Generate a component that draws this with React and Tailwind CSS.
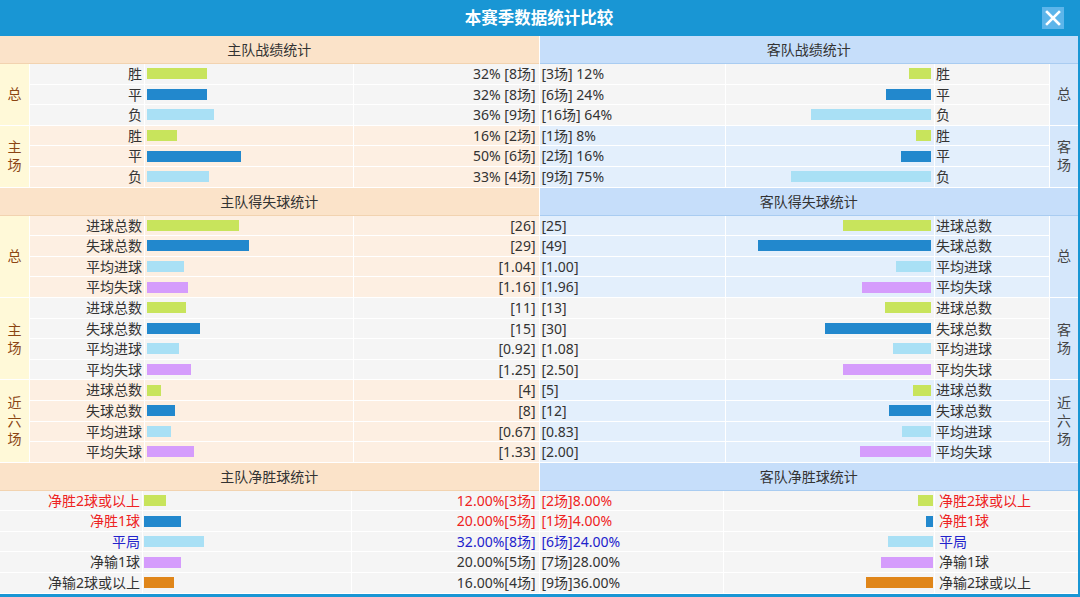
import React from "react"

const BAR = {
  green: "bg-[#c8e45c]",
  blue: "bg-[#2288cd]",
  sky: "bg-[#a9e0f5]",
  purple: "bg-[#d59cfc]",
  orange: "bg-[#e0861a]",
}

const ROW_BG = {
  gray: "bg-[#f5f5f5]",
  peach: "bg-[#fdefe2]",
  blue: "bg-[#e3effc]",
}

const TEXT = {
  dark: "text-[#333333]",
  red: "text-[#ee2222]",
  navy: "text-[#2222cc]",
}

// width helpers, taken from the bar lengths in the original
const pct = (v) => v * 1.87
const goals = (v) => v * 3.53
const avg = (v) => v * 35.3

const homeRecord = [
  {
    label: "总",
    bg: "gray",
    rows: [
      { name: "胜", bar: "green", w: pct(32), value: "32% [8场]" },
      { name: "平", bar: "blue", w: pct(32), value: "32% [8场]" },
      { name: "负", bar: "sky", w: pct(36), value: "36% [9场]" },
    ],
  },
  {
    label: "主场",
    bg: "peach",
    rows: [
      { name: "胜", bar: "green", w: pct(16), value: "16% [2场]" },
      { name: "平", bar: "blue", w: pct(50), value: "50% [6场]" },
      { name: "负", bar: "sky", w: pct(33), value: "33% [4场]" },
    ],
  },
]

const awayRecord = [
  {
    label: "总",
    bg: "gray",
    rows: [
      { name: "胜", bar: "green", w: pct(12), value: "[3场] 12%" },
      { name: "平", bar: "blue", w: pct(24), value: "[6场] 24%" },
      { name: "负", bar: "sky", w: pct(64), value: "[16场] 64%" },
    ],
  },
  {
    label: "客场",
    bg: "blue",
    rows: [
      { name: "胜", bar: "green", w: pct(8), value: "[1场] 8%" },
      { name: "平", bar: "blue", w: pct(16), value: "[2场] 16%" },
      { name: "负", bar: "sky", w: pct(75), value: "[9场] 75%" },
    ],
  },
]

const goalRows = (g, c, ag, ac) => [
  { name: "进球总数", bar: "green", w: goals(g), value: `[${g}]` },
  { name: "失球总数", bar: "blue", w: goals(c), value: `[${c}]` },
  { name: "平均进球", bar: "sky", w: avg(Number(ag)), value: `[${ag}]` },
  { name: "平均失球", bar: "purple", w: avg(Number(ac)), value: `[${ac}]` },
]

const homeGoals = [
  { label: "总", bg: "peach", rows: goalRows(26, 29, "1.04", "1.16") },
  { label: "主场", bg: "gray", rows: goalRows(11, 15, "0.92", "1.25") },
  { label: "近六场", bg: "peach", rows: goalRows(4, 8, "0.67", "1.33") },
]

const awayGoals = [
  { label: "总", bg: "blue", rows: goalRows(25, 49, "1.00", "1.96") },
  { label: "客场", bg: "gray", rows: goalRows(13, 30, "1.08", "2.50") },
  { label: "近六场", bg: "blue", rows: goalRows(5, 12, "0.83", "2.00") },
]

const homeNet = [
  { name: "净胜2球或以上", bar: "green", w: pct(12), value: "12.00%[3场]", tone: "red" },
  { name: "净胜1球", bar: "blue", w: pct(20), value: "20.00%[5场]", tone: "red" },
  { name: "平局", bar: "sky", w: pct(32), value: "32.00%[8场]", tone: "navy" },
  { name: "净输1球", bar: "purple", w: pct(20), value: "20.00%[5场]", tone: "dark" },
  { name: "净输2球或以上", bar: "orange", w: pct(16), value: "16.00%[4场]", tone: "dark" },
]

const awayNet = [
  { name: "净胜2球或以上", bar: "green", w: pct(8), value: "[2场]8.00%", tone: "red" },
  { name: "净胜1球", bar: "blue", w: pct(4), value: "[1场]4.00%", tone: "red" },
  { name: "平局", bar: "sky", w: pct(24), value: "[6场]24.00%", tone: "navy" },
  { name: "净输1球", bar: "purple", w: pct(28), value: "[7场]28.00%", tone: "dark" },
  { name: "净输2球或以上", bar: "orange", w: pct(36), value: "[9场]36.00%", tone: "dark" },
]

function Stacked({ text }) {
  return (
    <span className="flex flex-col items-center leading-[18px]">
      {text.split("").map((c, i) => (
        <span key={i}>{c}</span>
      ))}
    </span>
  )
}

function HomeHeader({ children }) {
  return (
    <div className="h-[28px] flex items-center justify-center bg-[#fbe3c9] border-b border-[#f2d3b0] text-[#333333]">
      {children}
    </div>
  )
}

function AwayHeader({ children }) {
  return (
    <div className="h-[28px] flex items-center justify-center bg-[#c6defa] border-b border-[#a9ccf1] text-[#333333]">
      {children}
    </div>
  )
}

function HomeRow({ row, bg, nameW = "w-[115px]", barPad = "pl-[2px]" }) {
  const tone = TEXT[row.tone || "dark"]
  return (
    <div className={`flex h-[20.6px] border-b border-white ${ROW_BG[bg]}`}>
      <div className={`${nameW} shrink-0 border-r border-white text-right pr-[2px] leading-[19.6px] whitespace-nowrap ${tone}`}>
        {row.name}
      </div>
      <div className={`w-[209px] shrink-0 border-r border-white flex items-center ${barPad}`}>
        <div className={`h-[11px] ${BAR[row.bar]}`} style={{ width: row.w }} />
      </div>
      <div className={`flex-1 text-right pr-[3px] leading-[19.6px] whitespace-nowrap ${tone}`}>{row.value}</div>
    </div>
  )
}

function AwayRow({ row, bg, nameW = "w-[115px]", barW = "w-[209px]", barPad = "pr-[3px]", namePad = "pl-[1px]" }) {
  const tone = TEXT[row.tone || "dark"]
  return (
    <div className={`flex h-[20.6px] border-b border-white ${ROW_BG[bg]}`}>
      <div className={`flex-1 pl-[2px] leading-[19.6px] whitespace-nowrap ${tone}`}>{row.value}</div>
      <div className={`${barW} shrink-0 border-l border-white flex items-center justify-end ${barPad}`}>
        <div className={`h-[11px] ${BAR[row.bar]}`} style={{ width: row.w }} />
      </div>
      <div className={`${nameW} border-l border-white leading-[19.6px] whitespace-nowrap ${namePad} ${tone}`}>
        {row.name}
      </div>
    </div>
  )
}

function HomeGroup({ group }) {
  return (
    <div className="flex">
      <div className="w-[30px] shrink-0 flex items-center justify-center bg-[#fff9d8] border-r border-b border-white text-[#8b4513]">
        <Stacked text={group.label} />
      </div>
      <div className="flex-1">
        {group.rows.map((r, i) => (
          <HomeRow key={i} row={r} bg={group.bg} />
        ))}
      </div>
    </div>
  )
}

function AwayGroup({ group }) {
  return (
    <div className="flex">
      <div className="flex-1">
        {group.rows.map((r, i) => (
          <AwayRow key={i} row={r} bg={group.bg} />
        ))}
      </div>
      <div className="w-[29px] shrink-0 flex items-center justify-center bg-[#d5e7fb] border-l border-b border-white text-[#444444]">
        <Stacked text={group.label} />
      </div>
    </div>
  )
}

export default function App() {
  return (
    <div className="w-[1080px] h-[597px] bg-white border-r-2 border-b-[3px] border-[#1996d4] font-[family-name:'Noto_Sans','Noto_Sans_CJK_SC',sans-serif] text-[14px] overflow-hidden">
      {/* title bar */}
      <div className="relative h-[36px] bg-[#1996d4] flex items-center justify-center">
        <span className="text-white font-bold text-[16.5px] tracking-[0px]">本赛季数据统计比较</span>
        <button
          type="button"
          className="absolute right-[14px] top-[7px] w-[22px] h-[22px] bg-[#5db5ea] flex items-center justify-center"
        >
          <svg width="18" height="18" viewBox="0 0 18 18">
            <path d="M3 3 L15 15 M15 3 L3 15" stroke="white" strokeWidth="2.6" strokeLinecap="square" />
          </svg>
        </button>
      </div>

      {/* 战绩统计 */}
      <div className="grid grid-cols-2 gap-x-px">
        <div>
          <HomeHeader>主队战绩统计</HomeHeader>
          {homeRecord.map((g, i) => (
            <HomeGroup key={i} group={g} />
          ))}
        </div>
        <div>
          <AwayHeader>客队战绩统计</AwayHeader>
          {awayRecord.map((g, i) => (
            <AwayGroup key={i} group={g} />
          ))}
        </div>
      </div>

      {/* 得失球统计 */}
      <div className="grid grid-cols-2 gap-x-px">
        <div>
          <HomeHeader>主队得失球统计</HomeHeader>
          {homeGoals.map((g, i) => (
            <HomeGroup key={i} group={g} />
          ))}
        </div>
        <div>
          <AwayHeader>客队得失球统计</AwayHeader>
          {awayGoals.map((g, i) => (
            <AwayGroup key={i} group={g} />
          ))}
        </div>
      </div>

      {/* 净胜球统计 */}
      <div className="grid grid-cols-2 gap-x-px">
        <div>
          <HomeHeader>主队净胜球统计</HomeHeader>
          {homeNet.map((r, i) => (
            <HomeRow key={i} row={r} bg="gray" nameW="w-[143px]" barPad="pl-px" />
          ))}
        </div>
        <div>
          <AwayHeader>客队净胜球统计</AwayHeader>
          {awayNet.map((r, i) => (
            <AwayRow key={i} row={r} bg="gray" nameW="w-[144px]" barW="w-[211px]" barPad="pr-px" namePad="pl-[4px]" />
          ))}
        </div>
      </div>
    </div>
  )
}
